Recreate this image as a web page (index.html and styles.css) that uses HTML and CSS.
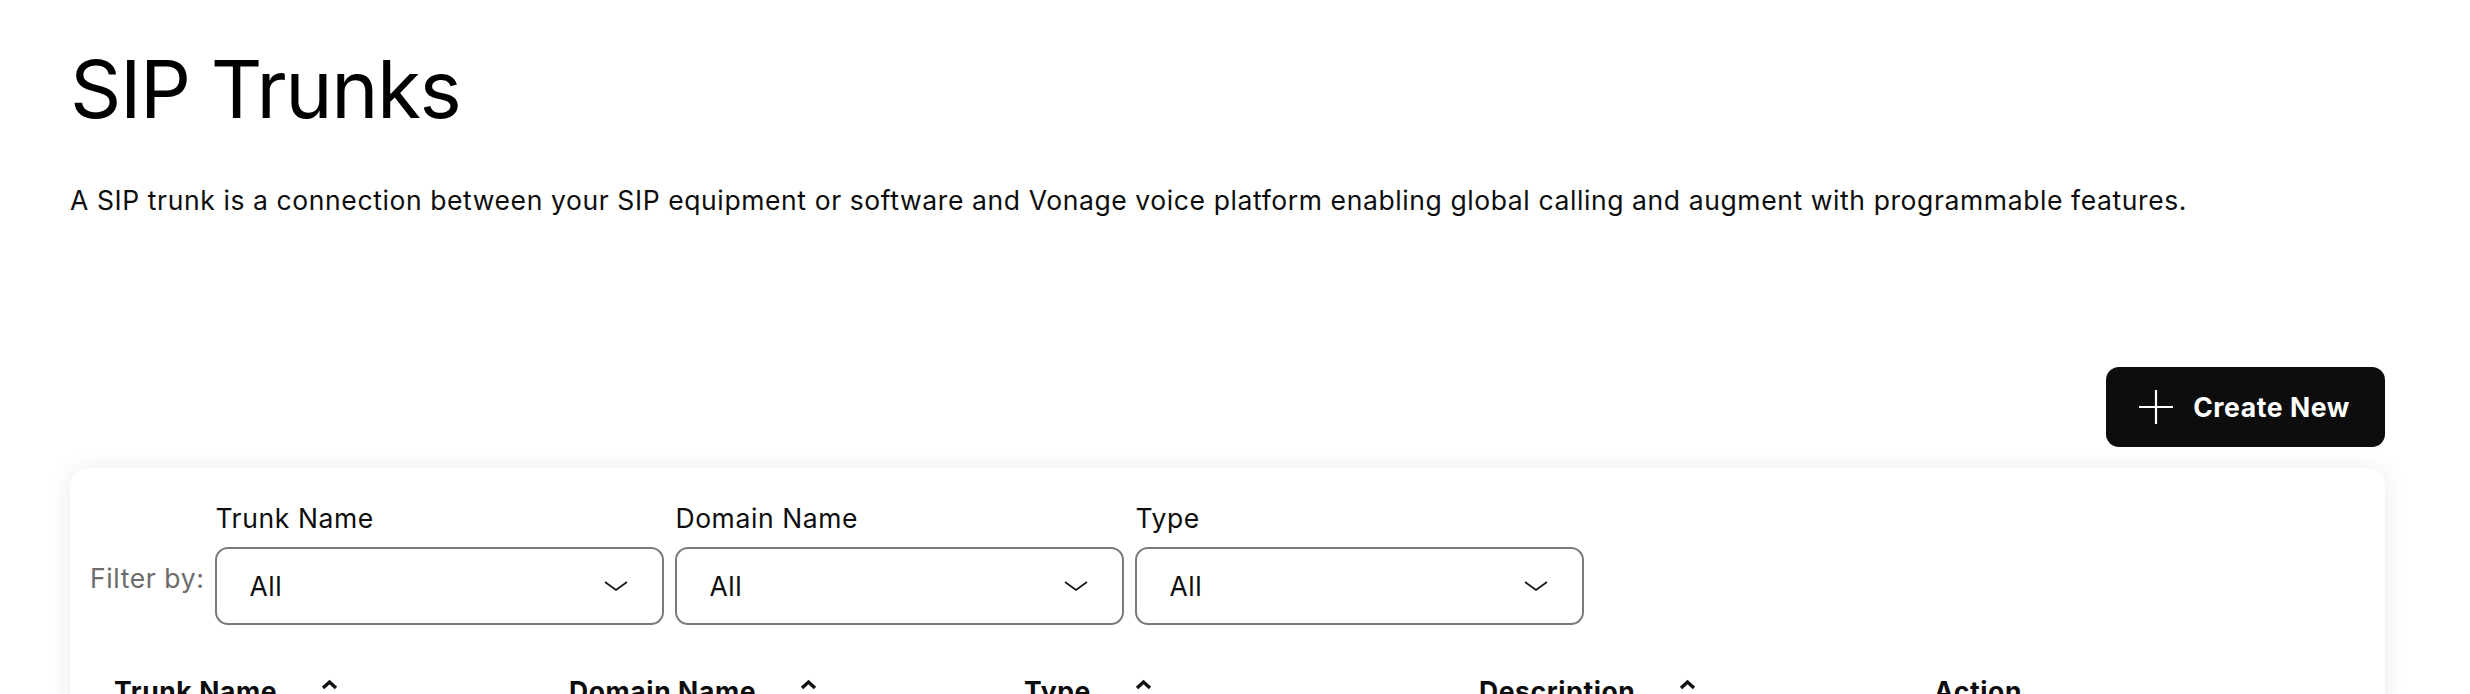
FILE: index.html
```html
<!DOCTYPE html>
<html lang="en">
<head>
    <meta charset="UTF-8">
    <meta name="viewport" content="width=device-width, initial-scale=1.0">
    <title>SIP Trunks</title>
    <link rel="stylesheet" href="styles.css">
</head>
<body>
    <div class="page">
        <h1 class="title">SIP Trunks</h1>
        <p class="intro">A SIP trunk is a connection between your SIP equipment or software and Vonage voice platform enabling global calling and augment with programmable features.</p>

        <div class="toolbar">
            <button class="create-btn" type="button">
                <svg class="plus" width="34" height="34" viewBox="0 0 34 34"><path d="M17 0v34M0 17h34" stroke="#fff" stroke-width="2.2" fill="none"/></svg>
                <span>Create New</span>
            </button>
        </div>

        <div class="card">
            <div class="filters">
                <span class="filter-by">Filter by:</span>
                <div class="filter">
                    <label>Trunk Name</label>
                    <div class="select">
                        <span>All</span>
                        <svg class="chevron" width="24" height="10" viewBox="0 0 24 10"><path d="M1 1l11 8 11-8" stroke="#111" stroke-width="1.6" fill="none"/></svg>
                    </div>
                </div>
                <div class="filter">
                    <label>Domain Name</label>
                    <div class="select">
                        <span>All</span>
                        <svg class="chevron" width="24" height="10" viewBox="0 0 24 10"><path d="M1 1l11 8 11-8" stroke="#111" stroke-width="1.6" fill="none"/></svg>
                    </div>
                </div>
                <div class="filter">
                    <label>Type</label>
                    <div class="select">
                        <span>All</span>
                        <svg class="chevron" width="24" height="10" viewBox="0 0 24 10"><path d="M1 1l11 8 11-8" stroke="#111" stroke-width="1.6" fill="none"/></svg>
                    </div>
                </div>
            </div>

            <div class="table-head">
                <div class="th">Trunk Name <svg class="sort" width="17" height="11" viewBox="0 0 17 11"><path d="M2 9l6.5-6 6.5 6" stroke="#111" stroke-width="3.4" fill="none"/></svg></div>
                <div class="th">Domain Name <svg class="sort" width="17" height="11" viewBox="0 0 17 11"><path d="M2 9l6.5-6 6.5 6" stroke="#111" stroke-width="3.4" fill="none"/></svg></div>
                <div class="th">Type <svg class="sort" width="17" height="11" viewBox="0 0 17 11"><path d="M2 9l6.5-6 6.5 6" stroke="#111" stroke-width="3.4" fill="none"/></svg></div>
                <div class="th">Description <svg class="sort" width="17" height="11" viewBox="0 0 17 11"><path d="M2 9l6.5-6 6.5 6" stroke="#111" stroke-width="3.4" fill="none"/></svg></div>
                <div class="th">Action</div>
            </div>
        </div>
    </div>
</body>
</html>
```

FILE: styles.css
```css
body {
    margin: 0;
    font-family: Inter, "Liberation Sans", sans-serif;
    font-size: 26.5px;
    letter-spacing: 0.6px;
    color: #0d0d0d;
    background-color: #fff;
}

.page {
    padding: 0 85px 0 70px;
}

.title {
    margin: 49px 0 0;
    font-size: 80px;
    line-height: 80px;
    font-weight: 400;
    letter-spacing: -1.4px;
    color: #000;
}

.intro {
    margin: 55px 0 0;
    line-height: 32px;
}

.toolbar {
    display: flex;
    justify-content: flex-end;
    margin-top: 151px;
}

.create-btn {
    display: flex;
    align-items: center;
    gap: 20px;
    height: 80px;
    padding: 0 35px 0 33px;
    border: none;
    border-radius: 13px;
    background-color: #0d0d0d;
    color: #fff;
    font-family: inherit;
    font-size: 26.5px;
    letter-spacing: 0.6px;
    font-weight: 700;
    cursor: pointer;
}

.card {
    margin-top: 21px;
    padding: 34px 22px 0 20px;
    height: 300px;
    border-radius: 19px;
    background-color: #fff;
    box-shadow: 0 2px 28px rgba(0, 0, 0, 0.09);
}

.filters {
    display: flex;
    align-items: flex-end;
    gap: 11px;
}

.filter-by {
    line-height: 32px;
    color: #6b6b6b;
    margin-bottom: 31px;
}

.filter label {
    display: block;
    line-height: 32px;
    margin-bottom: 13px;
}

.select {
    box-sizing: border-box;
    display: flex;
    align-items: center;
    justify-content: space-between;
    width: 449px;
    height: 78px;
    padding: 0 34px 0 32px;
    border: 2px solid #7a7a7a;
    border-radius: 13px;
}

.table-head {
    display: grid;
    grid-template-columns: repeat(4, 455px) 1fr;
    margin-top: 50px;
    padding-left: 24px;
}

.th {
    display: flex;
    align-items: flex-start;
    line-height: 32px;
    font-weight: 700;
}

.sort {
    margin-left: 44px;
    margin-top: 4px;
}
```
